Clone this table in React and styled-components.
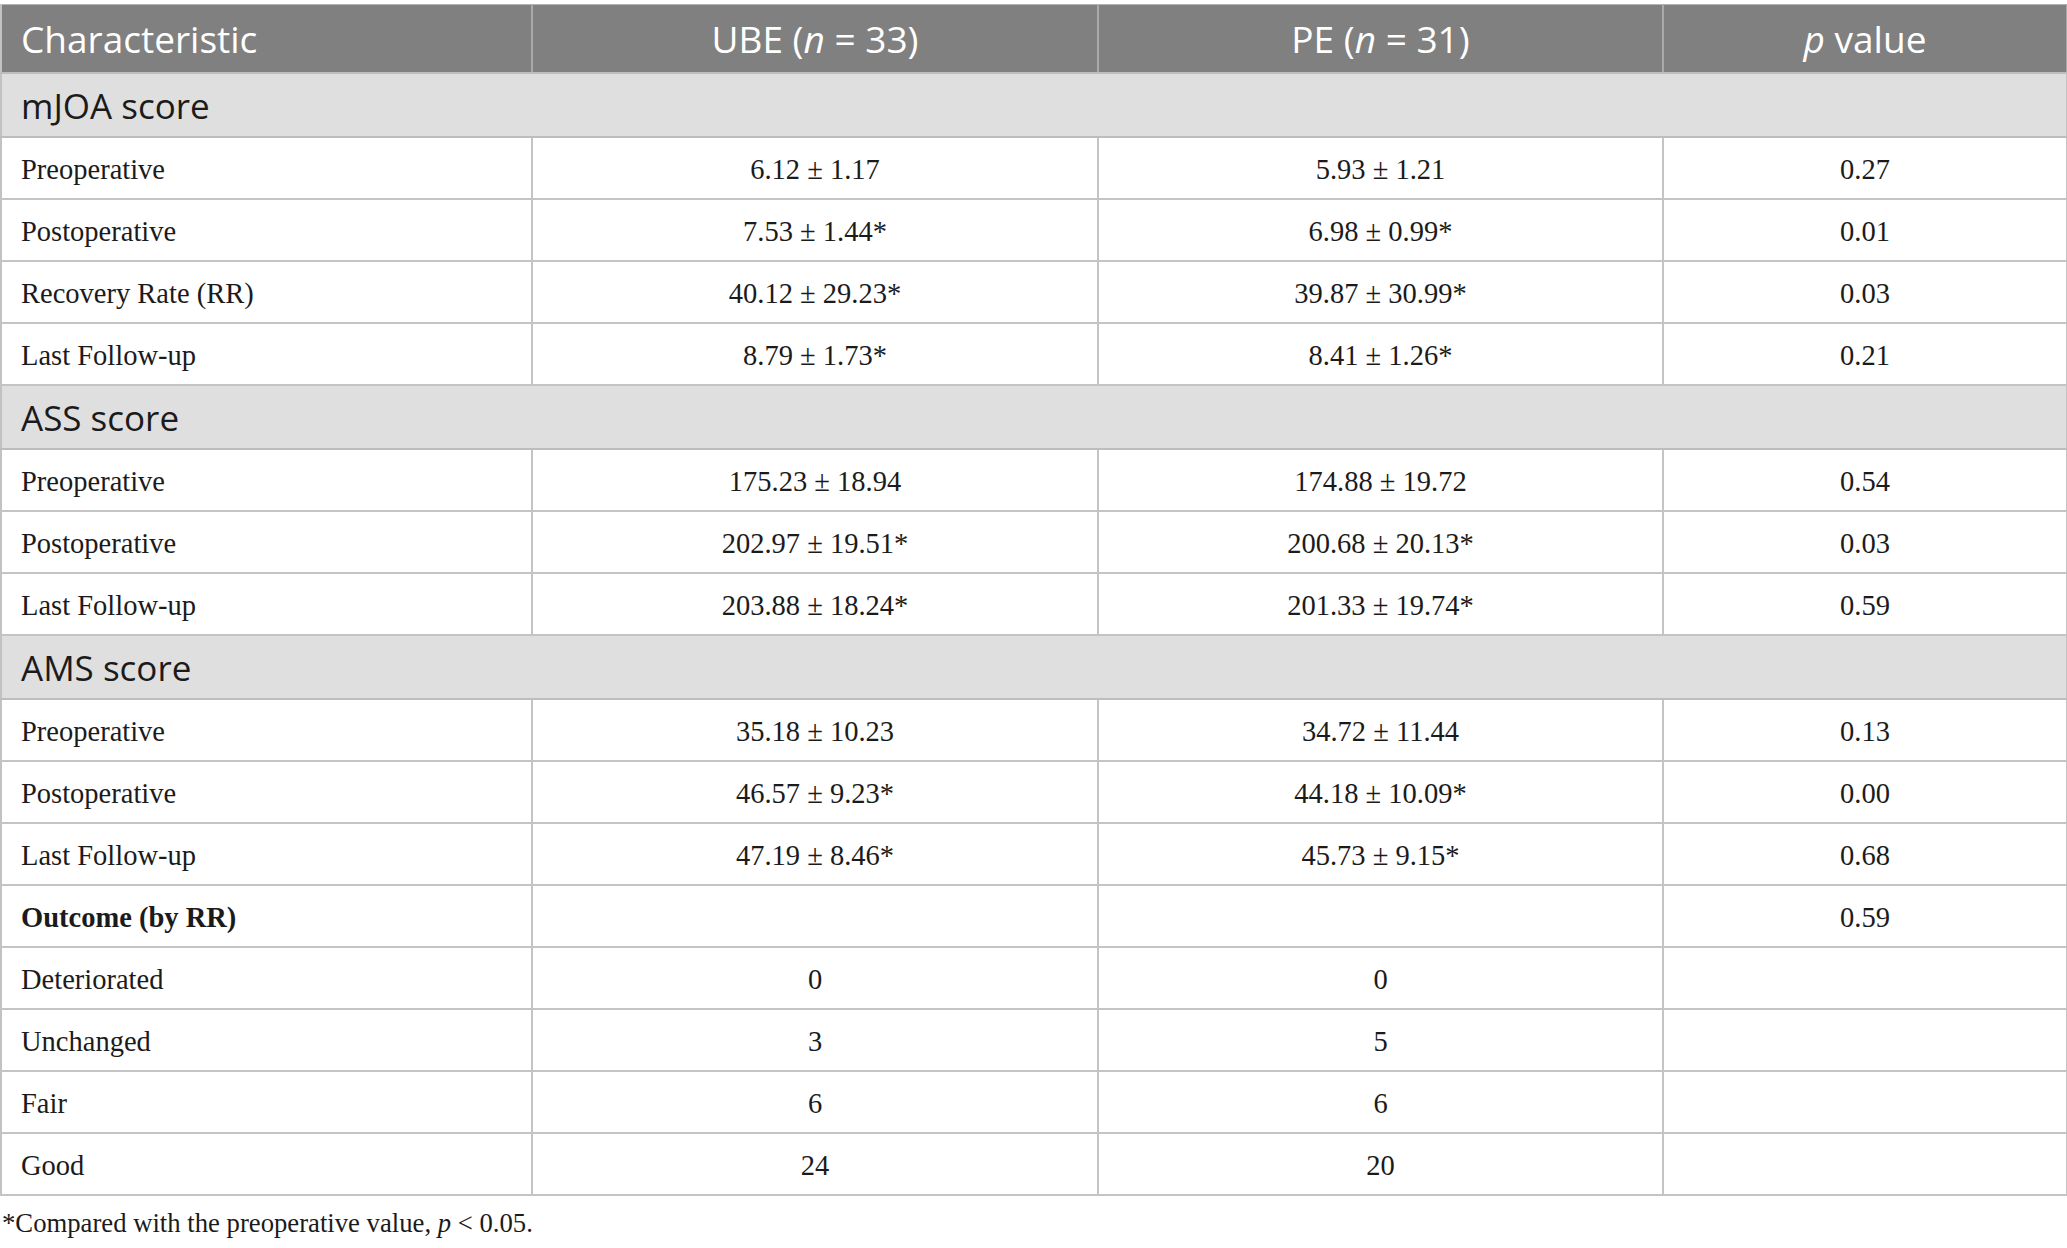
import React from "react";
import styled, { createGlobalStyle } from "styled-components";

const GlobalStyle = createGlobalStyle`
  html, body {
    margin: 0;
    padding: 0;
    background: #ffffff;
  }
`;

const Page = styled.div`
  padding-top: 4px;
  width: 2067px;
`;

const Table = styled.table`
  width: 2066px;
  border-collapse: collapse;
  table-layout: fixed;
  border: 2px solid #c2c2c2;
  border-top: 1px solid #b4b4b4;
`;

const HeadCell = styled.th`
  height: 65px;
  padding: 2px 19px 0;
  background: #7f807f;
  color: #ffffff;
  font-family: "Open Sans", "Noto Sans", sans-serif;
  font-weight: 400;
  font-size: 37px;
  line-height: 1.2;
  text-align: ${(p) => (p.left ? "left" : "center")};
  border-right: 2px solid #a9aaa9;
  border-bottom: 2px solid #bdbdbd;
  vertical-align: middle;
  em {
    font-style: italic;
  }
`;

const SectionCell = styled.td`
  height: 60px;
  padding: 2px 19px 0;
  background: #e0dfe0;
  color: #1b1b1b;
  font-family: "Open Sans", "Noto Sans", sans-serif;
  font-size: 35px;
  font-weight: 400;
  line-height: 1.2;
  text-align: left;
  border-bottom: 2px solid #bdbdbd;
`;

const Cell = styled.td`
  height: 55px;
  padding: 5px 19px 0;
  color: #1b1b1b;
  font-family: "Liberation Serif", "Times New Roman", serif;
  font-size: 28.5px;
  line-height: 1.2;
  font-weight: ${(p) => (p.bold ? 700 : 400)};
  text-align: ${(p) => (p.left ? "left" : "center")};
  border-right: 2px solid #c4c4c4;
  border-bottom: 2px solid #c4c4c4;
  white-space: nowrap;
`;

const Footnote = styled.p`
  margin: 12px 0 0 2px;
  font-family: "Liberation Serif", "Times New Roman", serif;
  font-size: 26.7px;
  color: #1b1b1b;
  em {
    font-style: italic;
  }
`;

const rows = [
  { section: "mJOA score" },
  ["Preoperative", "6.12 ± 1.17", "5.93 ± 1.21", "0.27"],
  ["Postoperative", "7.53 ± 1.44*", "6.98 ± 0.99*", "0.01"],
  ["Recovery Rate (RR)", "40.12 ± 29.23*", "39.87 ± 30.99*", "0.03"],
  ["Last Follow-up", "8.79 ± 1.73*", "8.41 ± 1.26*", "0.21"],
  { section: "ASS score" },
  ["Preoperative", "175.23 ± 18.94", "174.88 ± 19.72", "0.54"],
  ["Postoperative", "202.97 ± 19.51*", "200.68 ± 20.13*", "0.03"],
  ["Last Follow-up", "203.88 ± 18.24*", "201.33 ± 19.74*", "0.59"],
  { section: "AMS score" },
  ["Preoperative", "35.18 ± 10.23", "34.72 ± 11.44", "0.13"],
  ["Postoperative", "46.57 ± 9.23*", "44.18 ± 10.09*", "0.00"],
  ["Last Follow-up", "47.19 ± 8.46*", "45.73 ± 9.15*", "0.68"],
  { bold: true, cells: ["Outcome (by RR)", "", "", "0.59"] },
  ["Deteriorated", "0", "0", ""],
  ["Unchanged", "3", "5", ""],
  ["Fair", "6", "6", ""],
  ["Good", "24", "20", ""],
];

export default function App() {
  return (
    <Page>
      <GlobalStyle />
      <Table>
        <colgroup>
          <col style={{ width: 531 }} />
          <col style={{ width: 566 }} />
          <col style={{ width: 565 }} />
          <col style={{ width: 404 }} />
        </colgroup>
        <thead>
          <tr>
            <HeadCell left>Characteristic</HeadCell>
            <HeadCell>
              UBE (<em>n</em> = 33)
            </HeadCell>
            <HeadCell>
              PE (<em>n</em> = 31)
            </HeadCell>
            <HeadCell>
              <em>p</em> value
            </HeadCell>
          </tr>
        </thead>
        <tbody>
          {rows.map((row, i) => {
            if (row.section) {
              return (
                <tr key={i}>
                  <SectionCell colSpan={4}>{row.section}</SectionCell>
                </tr>
              );
            }
            const cells = row.cells || row;
            return (
              <tr key={i}>
                <Cell left bold={row.bold}>
                  {cells[0]}
                </Cell>
                <Cell>{cells[1]}</Cell>
                <Cell>{cells[2]}</Cell>
                <Cell>{cells[3]}</Cell>
              </tr>
            );
          })}
        </tbody>
      </Table>
      <Footnote>
        *Compared with the preoperative value, <em>p</em> &lt; 0.05.
      </Footnote>
    </Page>
  );
}
